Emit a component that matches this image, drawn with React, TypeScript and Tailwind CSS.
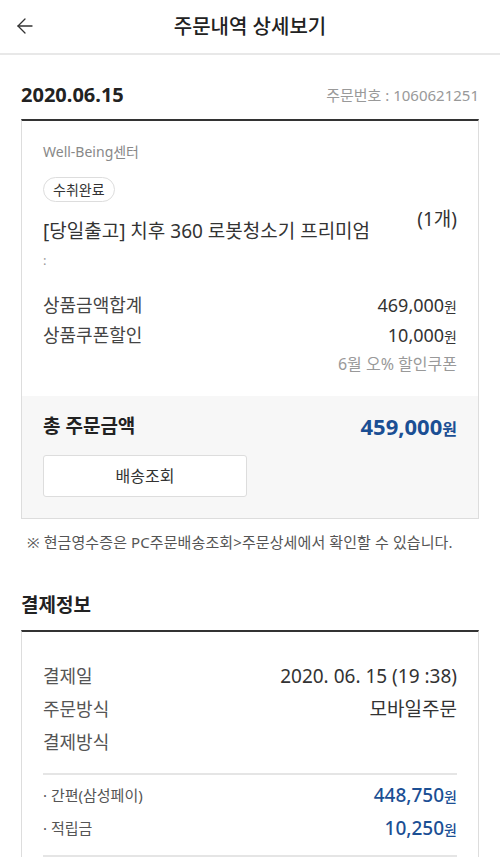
import { ArrowLeft } from "lucide-react";

const font = { fontFamily: '"Noto Sans", "Noto Sans CJK KR", sans-serif' };

export default function App() {
  return (
    <div style={font} className="w-[500px] min-h-[858px] bg-white text-[#222] overflow-hidden">
      <header className="h-[55px] flex items-center relative border-b-2 border-[#e8e8e8]">
        <button className="absolute left-[13px] top-[14px] text-[#333]">
          <ArrowLeft className="w-[24px] h-[24px]" strokeWidth={1.3} />
        </button>
        <h1 className="w-full text-center text-[20px] font-medium leading-none">주문내역 상세보기</h1>
      </header>

      <section className="px-[21px]">
        <div className="h-[64px] flex items-end justify-between pb-[10px]">
          <span className="text-[20px] font-bold leading-[28px] text-[#222]">2020.06.15</span>
          <span className="text-[15px] leading-[28px] text-[#999]">주문번호 : 1060621251</span>
        </div>
        <div className="border-t-2 border-[#333] border-x border-b border-x-[#ddd] border-b-[#ddd]">
          <div className="px-[21px] pt-[21px] pb-[19px]">
            <div className="text-[14px] leading-[20px] text-[#888]">Well-Being센터</div>
            <div className="mt-[15px] inline-flex h-[25px] items-center px-[9px] rounded-full border border-[#ddd] text-[14px] text-[#333]">수취완료</div>
            <div className="mt-[16px] flex justify-between">
              <span className="text-[19px] leading-[26px] text-[#333]">[당일출고] 치후 360 로봇청소기 프리미엄</span>
              <span className="text-[19px] leading-[26px] text-[#333] -mt-[12px]">(1개)</span>
            </div>
            <div className="mt-[6px] text-[13px] leading-[20px] text-[#999]">:</div>
            <div className="mt-[21px] flex justify-between text-[18px] leading-[28px] text-[#444]">
              <span>상품금액합계</span>
              <span className="text-[#333]">469,000<span className="text-[14px]">원</span></span>
            </div>
            <div className="flex justify-between text-[18px] leading-[28px] text-[#444]">
              <span>상품쿠폰할인</span>
              <span className="text-[#333]">10,000<span className="text-[14px]">원</span></span>
            </div>
            <div className="text-right text-[16px] leading-[26px] text-[#999]">6월 오% 할인쿠폰</div>
          </div>
          <div className="bg-[#f7f7f7] px-[21px] pt-[15px] pb-[21px]">
            <div className="flex justify-between items-center h-[30px]">
              <span className="text-[19px] font-bold text-[#222]">총 주문금액</span>
              <span className="text-[22px] font-bold text-[#1b4f94]">
                459,000<span className="text-[16px]">원</span>
              </span>
            </div>
            <button className="mt-[14px] w-[204px] h-[42px] bg-white border border-[#ddd] rounded-[3px] text-[16px] text-[#333]">배송조회</button>
          </div>
        </div>
        <p className="mt-[12px] pl-[6px] text-[15px] leading-[22px] text-[#555] whitespace-nowrap tracking-[0.1px]">※ 현금영수증은 PC주문배송조회&gt;주문상세에서 확인할 수 있습니다.</p>
      </section>

      <section className="px-[21px] mt-[38px]">
        <h2 className="text-[19px] font-bold leading-[28px] text-[#222] pb-[11px]">결제정보</h2>
        <div className="border-t-2 border-[#333] border-x border-x-[#ddd]">
          <div className="px-[21px] pt-[28px] pb-[14px]">
            <div className="flex justify-between text-[18px] leading-[33px]">
              <span className="text-[#555]">결제일</span>
              <span className="text-[19px] text-[#333]">2020. 06. 15 (19 :38)</span>
            </div>
            <div className="flex justify-between text-[18px] leading-[33px]">
              <span className="text-[#555]">주문방식</span>
              <span className="text-[19px] text-[#333]">모바일주문</span>
            </div>
            <div className="flex justify-between text-[18px] leading-[33px]">
              <span className="text-[#555]">결제방식</span>
            </div>
          </div>
          <div className="mx-[21px] border-t-2 border-[#e5e5e5] pt-[4px] pb-[10px]">
            <div className="flex justify-between items-center h-[33px]">
              <span className="text-[15px] text-[#555]">· 간편(삼성페이)</span>
              <span className="text-[19px] font-medium text-[#1b4f94]">
                448,750<span className="text-[14px]">원</span>
              </span>
            </div>
            <div className="flex justify-between items-center h-[33px]">
              <span className="text-[15px] text-[#555]">· 적립금</span>
              <span className="text-[19px] font-medium text-[#1b4f94]">
                10,250<span className="text-[14px]">원</span>
              </span>
            </div>
          </div>
          <div className="mx-[21px] border-t-2 border-[#e5e5e5]" />
        </div>
      </section>
    </div>
  );
}
